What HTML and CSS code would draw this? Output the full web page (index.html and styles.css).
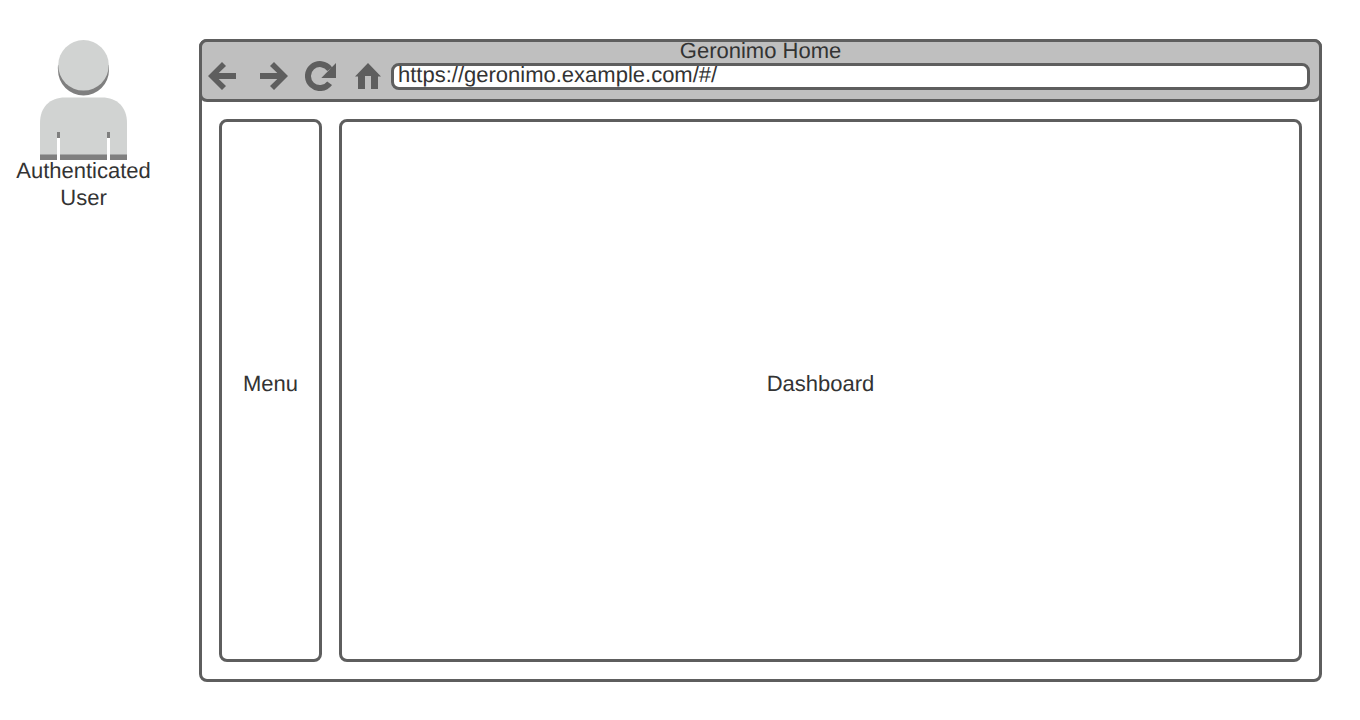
FILE: index.html
```html
<!DOCTYPE html>
<html lang="en">
<head>
<meta charset="utf-8">
<title>Geronimo Home</title>
<link rel="stylesheet" href="styles.css">
</head>
<body>
<div class="diagram">
  <figure class="actor">
    <svg class="actor-icon" viewBox="0 0 87 120" width="87" height="120" aria-hidden="true">
      <path class="shade" d="M18 25a25.5 25.5 0 0 0 0 5a25.5 25.5 0 0 0 51 0v-5z"/>
      <circle class="tone" cx="43.5" cy="25.3" r="25.3"/>
      <path class="tone" d="M0 120V83C0 67 10 57.5 25 57.5H62C77 57.5 87 67 87 83V120Z"/>
      <path class="shade" d="M0 114.5H87V120H0ZM17 92H20V98H17ZM67 92H70V98H67Z"/>
      <path class="slot" d="M17 98H20V120H17ZM67 98H70V120H67Z"/>
    </svg>
    <figcaption class="actor-name">Authenticated User</figcaption>
  </figure>
  <section class="browser">
    <header class="chrome">
      <h1 class="title">Geronimo Home</h1>
      <div class="toolbar">
        <button class="tool back" type="button" aria-label="Back">
          <svg width="28" height="28" viewBox="0 0 28 28"><path d="M0 14L14 0L18 4L10.700 11H28V17H10.700L18 24L14 28Z"/></svg>
        </button>
        <button class="tool forward" type="button" aria-label="Forward">
          <svg width="28" height="28" viewBox="0 0 28 28"><path d="M28 14L14 0L10 4L17.300 11H0V17H17.300L10 24L14 28Z"/></svg>
        </button>
        <button class="tool reload" type="button" aria-label="Reload">
          <svg width="32" height="30" viewBox="0 0 32 30"><path class="ring" d="M24.600 22.200A12 12 0 1 1 24.800 8.200"/><path d="M31 2V17H16.300Z"/></svg>
        </button>
        <button class="tool home" type="button" aria-label="Home">
          <svg width="26" height="26" viewBox="0 0 26 26"><path d="M13 0L26 13.500H23V26H16V13H10V26H3V13.500H0Z"/></svg>
        </button>
        <div class="address-box">
          <input class="address" type="text" aria-label="Address" value="https://geronimo.example.com/#/">
        </div>
      </div>
    </header>
    <div class="content">
      <nav class="panel">Menu</nav>
      <main class="panel">Dashboard</main>
    </div>
  </section>
</div>
</body>
</html>
```
FILE: styles.css
```css
* {
  box-sizing: border-box;
}

body {
  margin: 0;
  background: #fff;
  color: #333;
  font: 22px/27px "Liberation Sans", Arial, sans-serif;
  text-rendering: geometricPrecision;
}

.diagram {
  display: grid;
  grid-template-columns: 167px 1fr;
  column-gap: 32px;
  min-height: 100vh;
  padding: 39px 38px 38px 0;
}

.actor {
  display: flex;
  flex-direction: column;
  align-items: center;
  margin: 0;
  padding: 1px 12px 0;
  text-align: center;
}

.actor-icon {
  display: block;
}

.actor-name {
  margin-top: -3px;
}

.tone {
  fill: #d1d3d2;
}

.shade {
  fill: #7f7f7f;
}

.slot {
  fill: #fff;
}

.browser {
  display: flex;
  flex-direction: column;
  border: 3px solid #5e5e5e;
  border-radius: 8px;
}

.chrome {
  margin: -3px -3px 0;
  padding-bottom: 9px;
  border: 3px solid #5e5e5e;
  border-radius: 8px;
  background: #bfbfbf;
}

.title {
  margin: 0 0 3px;
  font-size: 22px;
  font-weight: 400;
  line-height: 18px;
  text-align: center;
}

.toolbar {
  display: flex;
  align-items: center;
  height: 27px;
  padding: 0 9px 0 6px;
}

.tool {
  display: flex;
  flex: none;
  padding: 0 0 2px;
  border: 0;
  background: none;
}

.tool svg {
  display: block;
  fill: #5e5e5e;
}

.tool .ring {
  fill: none;
  stroke: #5e5e5e;
  stroke-width: 6px;
}

.back {
  width: 52px;
}

.forward {
  width: 45px;
}

.reload {
  width: 50px;
}

.home {
  width: 36px;
}

.address-box {
  flex: 1;
  min-width: 0;
  height: 27px;
  border: 3px solid #5e5e5e;
  border-radius: 8px;
  background: #fff;
}

.address {
  display: block;
  width: 100%;
  height: 25px;
  margin-top: -4px;
  padding: 0 4px;
  border: 0;
  background: none;
  color: #333;
  font: inherit;
  line-height: 25px;
  text-rendering: inherit;
}

.content {
  display: grid;
  flex: 1;
  grid-template-columns: 103px 1fr;
  gap: 17px;
  padding: 17px;
}

.panel {
  display: flex;
  align-items: center;
  justify-content: center;
  padding-bottom: 14px;
  border: 3px solid #5e5e5e;
  border-radius: 8px;
}
```
